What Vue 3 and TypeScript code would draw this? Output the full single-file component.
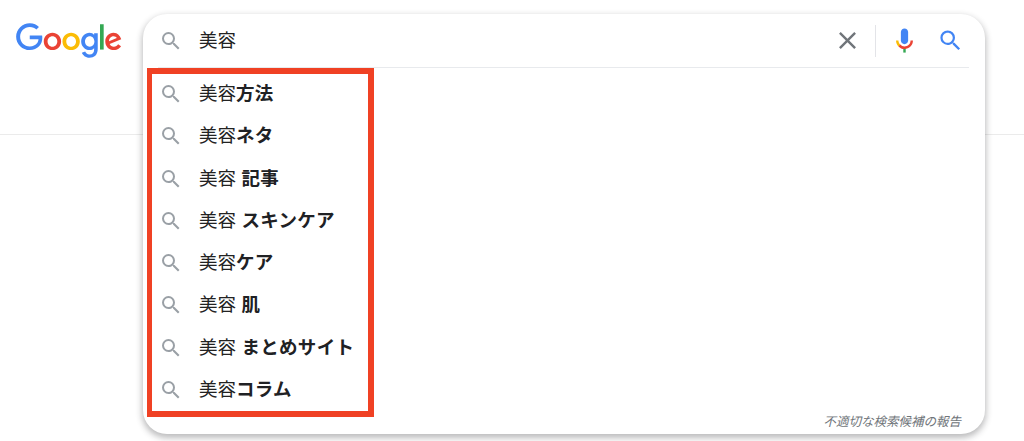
<script setup lang="ts">
const query = '美容'

// bold part of each suggestion, with a space where Google shows one
const suggestions: string[] = [
  '方法',
  'ネタ',
  ' 記事',
  ' スキンケア',
  'ケア',
  ' 肌',
  ' まとめサイト',
  'コラム',
]

const searchPath =
  'M15.5 14h-.79l-.28-.27A6.471 6.471 0 0 0 16 9.5 6.5 6.5 0 1 0 9.5 16c1.61 0 3.09-.59 4.23-1.57l.27.28v.79l5 4.99L20.49 19l-4.99-5zm-6 0C7.01 14 5 11.99 5 9.5S7.01 5 9.5 5 14 7.01 14 9.5 11.99 14 9.5 14z'
</script>

<template>
  <div class="page">
    <header class="header">
      <svg class="logo" viewBox="0 0 272 92" aria-label="Google">
        <path fill="#EA4335" d="M115.75 47.18c0 12.77-9.99 22.18-22.25 22.18s-22.25-9.41-22.25-22.18C71.25 34.32 81.24 25 93.5 25s22.25 9.32 22.25 22.18zm-9.74 0c0-7.98-5.79-13.44-12.51-13.44S80.99 39.2 80.99 47.18c0 7.9 5.79 13.44 12.51 13.44s12.51-5.55 12.51-13.44z" />
        <path fill="#FBBC05" d="M163.75 47.18c0 12.77-9.99 22.18-22.25 22.18s-22.25-9.41-22.25-22.18c0-12.85 9.99-22.18 22.25-22.18s22.25 9.32 22.25 22.18zm-9.74 0c0-7.98-5.79-13.44-12.51-13.44s-12.51 5.46-12.51 13.44c0 7.9 5.79 13.44 12.51 13.44s12.51-5.55 12.51-13.44z" />
        <path fill="#4285F4" d="M209.75 26.34v39.82c0 16.38-9.66 23.07-21.08 23.07-10.75 0-17.22-7.19-19.66-13.07l8.48-3.53c1.51 3.61 5.21 7.87 11.17 7.87 7.31 0 11.84-4.51 11.84-13v-3.19h-.34c-2.18 2.69-6.38 5.04-11.68 5.04-11.09 0-21.25-9.66-21.25-22.09 0-12.52 10.16-22.26 21.25-22.26 5.29 0 9.49 2.35 11.68 4.96h.34v-3.61h9.25zm-8.56 20.92c0-7.81-5.21-13.52-11.84-13.52-6.72 0-12.35 5.71-12.35 13.52 0 7.73 5.63 13.36 12.35 13.36 6.63 0 11.84-5.63 11.84-13.36z" />
        <path fill="#34A853" d="M225 3v65h-9.5V3h9.5z" />
        <path fill="#EA4335" d="M262.02 54.48l7.56 5.04c-2.44 3.61-8.32 9.83-18.48 9.83-12.6 0-22.01-9.74-22.01-22.18 0-13.19 9.49-22.18 20.92-22.18 11.51 0 17.14 9.16 18.98 14.11l1.01 2.52-29.65 12.28c2.27 4.45 5.8 6.72 10.75 6.72 4.96 0 8.4-2.44 10.92-6.14zm-23.27-7.98l19.82-8.23c-1.09-2.77-4.37-4.7-8.23-4.7-4.95 0-11.84 4.37-11.59 12.93z" />
        <path fill="#4285F4" d="M35.29 41.41V32H67c.31 1.64.47 3.58.47 5.68 0 7.06-1.93 15.79-8.15 22.01-6.05 6.3-13.78 9.66-24.02 9.66C16.32 69.35.36 53.89.36 34.91.36 15.93 16.32.47 35.3.47c10.5 0 17.98 4.12 23.6 9.49l-6.64 6.64c-4.03-3.78-9.49-6.72-16.97-6.72-13.86 0-24.7 11.17-24.7 25.03 0 13.86 10.84 25.03 24.7 25.03 8.99 0 14.11-3.61 17.39-6.89 2.66-2.66 4.41-6.46 5.1-11.65l-22.49.01z" />
      </svg>
    </header>

    <!-- open search box, sits over the header line -->
    <div class="box">
      <div class="input-row">
        <svg class="icon" viewBox="0 0 24 24"><path :d="searchPath" /></svg>
        <span class="query">{{ query }}</span>
        <div class="actions">
          <svg class="clear" viewBox="0 0 24 24">
            <path d="M19 6.41L17.59 5 12 10.59 6.41 5 5 6.41 10.59 12 5 17.59 6.41 19 12 13.41 17.59 19 19 17.59 13.41 12z" />
          </svg>
          <span class="divider"></span>
          <svg class="mic" viewBox="0 0 24 24">
            <path fill="#4285f4" d="m12 15c1.66 0 3-1.31 3-2.97v-7.02c0-1.66-1.34-3.01-3-3.01s-3 1.34-3 3.01v7.02c0 1.66 1.34 2.97 3 2.97z" />
            <path fill="#34a853" d="m11 18.08h2v3.92h-2z" />
            <path fill="#fbbc05" d="m7.05 16.87c-1.27-1.33-2.05-2.83-2.05-4.87h2c0 1.45 0.56 2.42 1.47 3.38v0.32l-1.15 1.18z" />
            <path fill="#ea4335" d="m12 16.93a4.97 5.25 0 0 1 -3.54 -1.55l-1.41 1.49c1.26 1.34 3.02 2.13 4.95 2.13 3.87 0 6.99-2.92 6.99-6.99h-2c0 2.92-2.24 4.92-4.99 4.92z" />
          </svg>
          <svg class="go" viewBox="0 0 24 24"><path :d="searchPath" /></svg>
        </div>
      </div>

      <ul class="list">
        <li v-for="item in suggestions" :key="item" class="row">
          <svg class="icon" viewBox="0 0 24 24"><path :d="searchPath" /></svg>
          <span class="label">{{ query }}<b>{{ item }}</b></span>
        </li>
      </ul>

      <div class="report">不適切な検索候補の報告</div>
    </div>

    <!-- red annotation drawn on the screenshot -->
    <div class="highlight"></div>
  </div>
</template>

<style scoped>
.page {
  position: relative;
  width: 1024px;
  height: 441px;
  overflow: hidden;
  background: #fff;
  font-family: "Liberation Sans", "Noto Sans CJK JP", sans-serif;
  color: #222;
}

.header {
  display: flex;
  align-items: flex-start;
  height: 135px;
  padding: 23px 0 0 16px;
  box-sizing: border-box;
  border-bottom: 1px solid #ebebeb;
}

.logo {
  width: 106px;
  height: 36px;
}

.box {
  position: absolute;
  left: 143px;
  top: 14px;
  width: 842px;
  height: 420px;
  display: flex;
  flex-direction: column;
  background: #fff;
  border-radius: 24px;
  box-shadow: 0 3px 6px 1px rgba(32, 33, 36, 0.3);
}

.input-row {
  display: flex;
  align-items: center;
  flex: none;
  height: 53px;
  margin: 0 16px 0 15px;
  padding-left: 1px;
  border-bottom: 1px solid #e8eaed;
  box-sizing: content-box;
}

.icon {
  flex: none;
  width: 24px;
  height: 24px;
  margin-right: 16px;
  fill: #9aa0a6;
}

.query,
.label {
  font-size: 18.5px;
  line-height: 24px;
}

.actions {
  display: flex;
  align-items: center;
  margin-left: auto;
}

.clear {
  width: 29px;
  height: 29px;
  margin-right: 13px;
  fill: #70757a;
}

.divider {
  width: 1px;
  height: 32px;
  margin-right: 14px;
  background: #e3e4e8;
}

.mic {
  width: 29px;
  height: 29px;
  margin-right: 18px;
}

.go {
  width: 27px;
  height: 27px;
  margin-right: 5px;
  fill: #4285f4;
}

.list {
  flex: none;
  margin: 0;
  padding: 5px 0 0 16px;
  list-style: none;
}

.row {
  display: flex;
  align-items: center;
  height: 42.25px;
}

.label {
  white-space: pre;
}

.label b {
  font-weight: 700;
  letter-spacing: 0.3px;
  color: #202124;
}

.report {
  flex: 1;
  padding-right: 24px;
  font-size: 12.5px;
  line-height: 23px;
  font-style: italic;
  text-align: right;
  color: #70757a;
}

.highlight {
  position: absolute;
  left: 147px;
  top: 68px;
  width: 227px;
  height: 349px;
  box-sizing: border-box;
  border: solid #f04124;
  border-width: 6px 6px 6px 5px;
}
</style>
